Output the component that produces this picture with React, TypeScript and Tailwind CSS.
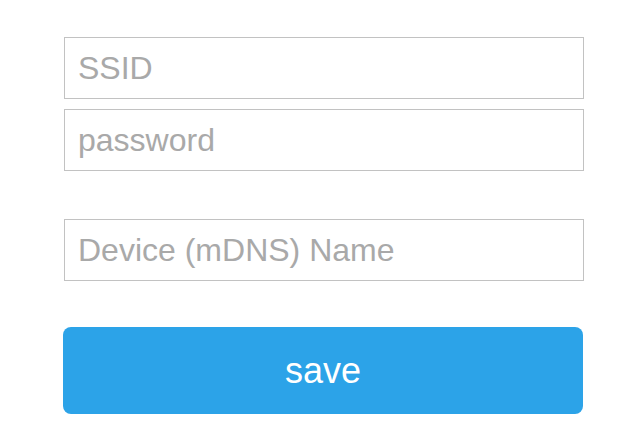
import React from "react";

export default function App() {
  const inputCls =
    "block w-[520px] h-[62px] border border-[#c2c2c2] bg-white px-[13px] text-[32px] text-[#333] placeholder:text-[#a9a9a9] outline-none";
  return (
    <div
      className="w-[622px] h-[448px] bg-white pl-[64px] pt-[37px]"
      style={{ fontFamily: '"Liberation Sans", Arial, sans-serif' }}
    >
      <div className="flex flex-col w-[520px]">
        <input className={inputCls} placeholder="SSID" />
        <input className={inputCls + " mt-[10px]"} placeholder="password" />
        <input className={inputCls + " mt-[48px]"} placeholder="Device (mDNS) Name" />
        <button className="mt-[46px] ml-[-1px] w-[520px] h-[87px] rounded-[8px] bg-[#2ca3e8] text-white text-[36px]">
          save
        </button>
      </div>
    </div>
  );
}
